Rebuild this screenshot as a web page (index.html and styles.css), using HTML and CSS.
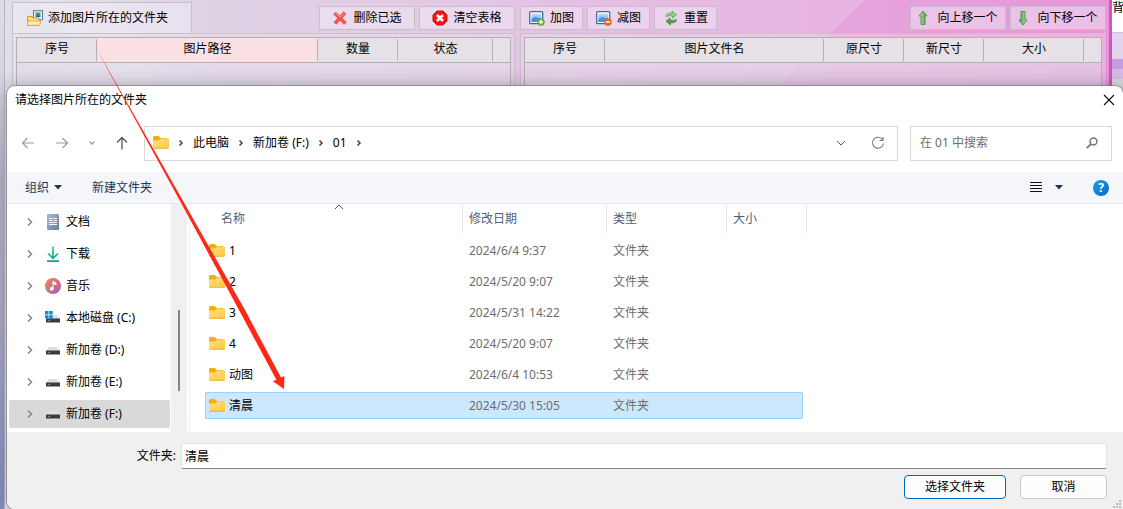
FILE: index.html
```
<!DOCTYPE html>
<html lang="zh-CN">
<head>
<meta charset="utf-8">
<title>请选择图片所在的文件夹</title>
<link rel="stylesheet" href="styles.css">
</head>
<body>
<svg class="defs" aria-hidden="true">
  <defs>
    <linearGradient id="g-folder" x1="0" y1="0" x2="1" y2="1"><stop offset="0" stop-color="#ffe08a"/><stop offset="1" stop-color="#ffc83a"/></linearGradient>
    <linearGradient id="g-doc" x1="0" y1="0" x2="1" y2="1"><stop offset="0" stop-color="#a3bdd6"/><stop offset="1" stop-color="#617f9f"/></linearGradient>
    <linearGradient id="g-music" x1="0" y1="0" x2="1" y2="1"><stop offset="0" stop-color="#f08a4b"/><stop offset="1" stop-color="#a859b8"/></linearGradient>
    <linearGradient id="g-down" x1="0" y1="0" x2="0" y2="1"><stop offset="0" stop-color="#36c98b"/><stop offset="1" stop-color="#149f95"/></linearGradient>
    <linearGradient id="g-green" x1="0" y1="0" x2="1" y2="0"><stop offset="0" stop-color="#b5e6a5"/><stop offset="1" stop-color="#3f9f45"/></linearGradient>
    <linearGradient id="g-sky" x1="0" y1="0" x2="0" y2="1"><stop offset="0" stop-color="#b8e2fa"/><stop offset="1" stop-color="#5a9fdc"/></linearGradient>
    <linearGradient id="g-arrow" gradientUnits="userSpaceOnUse" x1="92" y1="40" x2="108" y2="68"><stop offset="0" stop-color="#ff2718" stop-opacity=".1"/><stop offset="1" stop-color="#ff2718"/></linearGradient>
    <symbol id="folder" viewBox="0 0 16 14"><path d="M0 11V1.500Q0 0 1.500 0H5.500L8 2H14V5H0Z" fill="#f2ae13"/><path d="M0 4.500H6L8 2.500H15Q16 2.500 16 3.500V11.500Q16 12.500 15 12.500H1Q0 12.500 0 11.500Z" fill="url(#g-folder)"/><path d="M.5 12.300H15.500" stroke="#e5a820" stroke-width=".8"/></symbol>
    <symbol id="chev" viewBox="0 0 8 10"><path d="M2 1.500L5.500 5 2 8.500" fill="none" stroke="currentColor" stroke-width="1.500"/></symbol>
    <symbol id="chev-s" viewBox="0 0 8 10"><path d="M2.500 2.500L5 5 2.500 7.500" fill="none" stroke="currentColor" stroke-width="1.500"/></symbol>
    <symbol id="caret" viewBox="0 0 8 5"><path d="M0 0H8L4 4.500Z" fill="currentColor"/></symbol>
    <symbol id="drive" viewBox="0 0 16 16"><path d="M4 5H12L15 9H1Z" fill="#dcdfe3"/><rect x="1" y="8.500" width="14" height="4" rx=".5" fill="#3c3c3c"/><circle cx="4" cy="10.500" r=".8" fill="#52e06c"/></symbol>
    <symbol id="photo" viewBox="0 0 16 16"><rect x=".7" y="1.700" width="13" height="12" rx="1" fill="#fff" stroke="#3a67b0" stroke-width="1.300"/><rect x="2.500" y="3.500" width="9.500" height="8.500" fill="url(#g-sky)"/><path d="M2.500 9L6 7 12 9V12H2.500Z" fill="#4d8ed0"/></symbol>
    <symbol id="uparrow" viewBox="0 0 10 16"><path d="M5 1L9 6H7V14.500H3V6H1Z" fill="url(#g-green)" stroke="#3a8c3d" stroke-width=".8"/></symbol>
  </defs>
</svg>

<div class="desktop">
  <main class="app">
    <section class="pane pane-left">
      <div class="bar">
        <button class="tab"><svg width="16" height="16" viewBox="0 0 16 16"><rect x="6.500" y=".7" width="9" height="9" fill="#e8f1fb" stroke="#547aa8"/><rect x="8.500" y="2.500" width="5" height="4.500" fill="#51a351"/><path d="M9 7L11 4 13.500 7Z" fill="#2c5bb5"/><path d="M.5 6.500H5L6 8H12V15.300H.5Z" fill="#ffdf84" stroke="#d99c2b"/><path d="M1 11H14L12.500 15.300H.5Z" fill="#fff0ae" stroke="#dfa434" stroke-width=".8"/></svg>添加图片所在的文件夹</button>
        <div class="group">
          <button class="tool wide"><svg width="16" height="16" viewBox="0 0 16 16"><path d="M2.500 3L13.500 13.500M13 2.500L3 13.500" stroke="#f4544e" stroke-width="3.800"/><path d="M3.500 3L8 7 12.500 3" fill="none" stroke="#ff9088" stroke-width="1"/></svg>删除已选</button>
          <button class="tool wide"><svg width="16" height="16" viewBox="0 0 16 16"><path d="M5 1H11L15 5V11L11 15H5L1 11V5Z" fill="#f41414" stroke="#c91010"/><path d="M5 5L11 11M11 5L5 11" stroke="#fff" stroke-width="2.600"/></svg>清空表格</button>
        </div>
      </div>
      <div class="frame"><div class="sheet">
        <table class="grid">
          <colgroup><col class="c80"><col><col class="c80"><col class="c95"><col class="c17"></colgroup>
          <thead><tr><th>序号</th><th class="hot">图片路径</th><th>数量</th><th>状态</th><th></th></tr></thead>
        </table>
      </div></div>
    </section>
    <section class="pane pane-right">
      <div class="bar">
        <div class="group">
          <button class="tool"><svg width="16" height="16" viewBox="0 0 16 16"><use href="#photo"/><circle cx="12" cy="12" r="3.700" fill="#62a72f"/><path d="M12 9.800V14.200M9.800 12H14.200" stroke="#fff" stroke-width="1.400"/></svg>加图</button>
          <button class="tool"><svg width="16" height="16" viewBox="0 0 16 16"><use href="#photo"/><circle cx="12" cy="12" r="3.700" fill="#e4611a"/><path d="M9.800 12H14.200" stroke="#fff" stroke-width="1.500"/></svg>减图</button>
          <button class="tool"><svg width="16" height="16" viewBox="0 0 16 16"><path d="M3 6.500Q3.500 2.500 9 3.300V1L13.500 4.800 9.500 8V6Q6 5 3 6.500Z" fill="#8bd285" stroke="#4a9f4a" stroke-width=".7"/><path d="M13.500 9.500Q13 13.500 7.500 12.700V15L3 11.200 7 8V10Q10.500 11 13.500 9.500Z" fill="#4aa548" stroke="#368538" stroke-width=".7"/></svg>重置</button>
        </div>
        <div class="group">
          <button class="tool wide move"><svg width="10" height="16"><use href="#uparrow"/></svg>向上移一个</button>
          <button class="tool wide move"><svg class="flip" width="10" height="16"><use href="#uparrow"/></svg>向下移一个</button>
        </div>
      </div>
      <div class="frame"><div class="sheet">
        <table class="grid">
          <colgroup><col class="c80"><col><col class="c80"><col class="c80"><col class="c100"><col class="c17"></colgroup>
          <thead><tr><th>序号</th><th>图片文件名</th><th>原尺寸</th><th>新尺寸</th><th>大小</th><th></th></tr></thead>
        </table>
      </div></div>
    </section>
  </main>
  <aside class="neighbor"><span class="n-text">背景</span><span class="n-pale"></span><span class="n-violet"></span><span class="n-lilac"></span><span class="n-row"></span></aside>

  <section class="dialog" role="dialog" aria-labelledby="dlg-title">
    <header class="titlebar">
      <h1 id="dlg-title">请选择图片所在的文件夹</h1>
      <button class="plain" aria-label="关闭"><svg width="12" height="12" viewBox="0 0 12 12"><path d="M1 1L11 11M11 1L1 11" stroke="#111" stroke-width="1.100"/></svg></button>
    </header>
    <div class="nav">
      <div class="history">
        <button class="plain n18 dim" aria-label="后退"><svg width="14" height="14" viewBox="0 0 14 14"><path d="M13 7H1.500M6.500 2L1.500 7 6.500 12" fill="none" stroke="currentColor" stroke-width="1.200"/></svg></button>
        <button class="plain n18 dim" aria-label="前进"><svg width="14" height="14" viewBox="0 0 14 14"><path d="M1 7H12.500M7.500 2L12.500 7 7.500 12" fill="none" stroke="currentColor" stroke-width="1.200"/></svg></button>
        <button class="plain n10 dim" aria-label="最近位置"><svg width="8" height="6" viewBox="0 0 8 6"><path d="M1.500 1.500L4 4 6.500 1.500" fill="none" stroke="currentColor" stroke-width="1.300"/></svg></button>
        <button class="plain n18 mid" aria-label="向上"><svg width="14" height="14" viewBox="0 0 14 14"><path d="M7 13.500V1.500M2 6.500L7 1.500 12 6.500" fill="none" stroke="currentColor" stroke-width="1.300"/></svg></button>
      </div>
      <div class="address">
        <svg width="16" height="14"><use href="#folder"/></svg>
        <svg class="sep" width="8" height="10"><use href="#chev-s"/></svg>
        <button class="plain">此电脑</button>
        <svg class="sep" width="8" height="10"><use href="#chev-s"/></svg>
        <button class="plain">新加卷 (F:)</button>
        <svg class="sep" width="8" height="10"><use href="#chev-s"/></svg>
        <button class="plain">01</button>
        <svg class="sep" width="8" height="10"><use href="#chev-s"/></svg>
        <span class="fill"></span>
        <button class="plain n10 mid" aria-label="展开"><svg width="10" height="6" viewBox="0 0 10 6"><path d="M1 1L5 5 9 1" fill="none" stroke="currentColor"/></svg></button>
        <button class="plain refresh" aria-label="刷新"><svg width="14" height="14" viewBox="0 0 14 14"><path d="M11.800 4A5.500 5.500 0 1 0 12.500 7.500M12 1V4.500H8.500" fill="none" stroke="currentColor" stroke-width="1.100"/></svg></button>
      </div>
      <div class="search">
        <input type="search" aria-label="搜索" placeholder="在 01 中搜索">
        <svg width="12" height="12" viewBox="0 0 12 12"><circle cx="7.500" cy="4.500" r="3.400" fill="none" stroke="#777" stroke-width="1.500"/><path d="M5 7L.8 11.200" stroke="#777" stroke-width="1.800"/></svg>
      </div>
    </div>
    <div class="commands">
      <button class="plain cmd">组织<svg width="8" height="5"><use href="#caret"/></svg></button>
      <button class="plain cmd">新建文件夹</button>
      <span class="fill"></span>
      <button class="plain cmd views" aria-label="视图"><svg width="12" height="11" viewBox="0 0 12 11"><path d="M0 .5H12M0 3.500H12M0 6.500H12M0 9.500H12" stroke="#111"/></svg><svg width="8" height="5"><use href="#caret"/></svg></button>
      <button class="plain help" aria-label="帮助">?</button>
    </div>
    <div class="body">
      <ul class="tree">
        <li><svg class="exp" width="8" height="10"><use href="#chev"/></svg><svg width="16" height="16" viewBox="0 0 16 16"><rect x="2" width="12" height="16" rx="1" fill="url(#g-doc)"/><path d="M4 4.500H7.500M4 6.500H7.500M8.500 4.500H12M8.500 6.500H12M4 8.500H12M4 10.500H12" stroke="#fff" stroke-width="1"/></svg>文档</li>
        <li><svg class="exp" width="8" height="10"><use href="#chev"/></svg><svg width="16" height="16" viewBox="0 0 16 16"><path d="M8 .5V12M3 7.500L8 12.300 13 7.500M2 15.200H14" fill="none" stroke="url(#g-down)" stroke-width="1.700"/></svg>下载</li>
        <li><svg class="exp" width="8" height="10"><use href="#chev"/></svg><svg width="16" height="16" viewBox="0 0 16 16"><circle cx="8" cy="8" r="8" fill="url(#g-music)"/><circle cx="6.700" cy="10.800" r="1.900" fill="#fff"/><path d="M8 10.800V3.500L11 5V6.700L8 5.500" fill="#fff" stroke="#fff" stroke-width="1"/></svg>音乐</li>
        <li><svg class="exp" width="8" height="10"><use href="#chev"/></svg><svg width="16" height="16" viewBox="0 0 16 16"><use href="#drive" width="16" height="16"/><path d="M0 1H3.500V4.500H0ZM4.200 1H7.700V4.500H4.200ZM0 5.200H3.500V8.500H0ZM4.200 5.200H7.700V8.500H4.200Z" fill="#1488d8"/></svg>本地磁盘 (C:)</li>
        <li><svg class="exp" width="8" height="10"><use href="#chev"/></svg><svg width="16" height="16"><use href="#drive"/></svg>新加卷 (D:)</li>
        <li><svg class="exp" width="8" height="10"><use href="#chev"/></svg><svg width="16" height="16"><use href="#drive"/></svg>新加卷 (E:)</li>
        <li class="on"><svg class="exp" width="8" height="10"><use href="#chev"/></svg><svg width="16" height="16"><use href="#drive"/></svg>新加卷 (F:)</li>
      </ul>
      <div class="gutter"><span class="thumb"></span></div>
      <div class="files">
        <table class="list">
          <colgroup><col class="f-name"><col class="f-date"><col class="f-type"><col class="f-size"><col class="f-tail"></colgroup>
          <thead><tr><th class="first">名称<svg class="sort" width="10" height="6" viewBox="0 0 10 6"><path d="M1 5L5 1 9 5" fill="none" stroke="#555"/></svg></th><th>修改日期</th><th>类型</th><th colspan="2">大小</th></tr></thead>
          <tbody>
            <tr><td><span class="file"><svg width="16" height="14"><use href="#folder"/></svg>1</span></td><td>2024/6/4 9:37</td><td>文件夹</td><td></td></tr>
            <tr><td><span class="file"><svg width="16" height="14"><use href="#folder"/></svg>2</span></td><td>2024/5/20 9:07</td><td>文件夹</td><td></td></tr>
            <tr><td><span class="file"><svg width="16" height="14"><use href="#folder"/></svg>3</span></td><td>2024/5/31 14:22</td><td>文件夹</td><td></td></tr>
            <tr><td><span class="file"><svg width="16" height="14"><use href="#folder"/></svg>4</span></td><td>2024/5/20 9:07</td><td>文件夹</td><td></td></tr>
            <tr><td><span class="file"><svg width="16" height="14"><use href="#folder"/></svg>动图</span></td><td>2024/6/4 10:53</td><td>文件夹</td><td></td></tr>
            <tr class="on"><td><span class="file"><svg width="16" height="14"><use href="#folder"/></svg>清晨</span></td><td>2024/5/30 15:05</td><td>文件夹</td><td></td></tr>
          </tbody>
        </table>
      </div>
    </div>
    <footer class="foot">
      <div class="field"><label for="folder-name">文件夹:</label><input id="folder-name" type="text" value="清晨"></div>
      <div class="actions"><button class="btn primary">选择文件夹</button><button class="btn cancel">取消</button></div>
      <svg class="grip" width="9" height="9" viewBox="0 0 9 9"><path d="M6 0H8V2H6ZM3 3H5V5H3ZM6 3H8V5H6ZM0 6H2V8H0ZM3 6H5V8H3ZM6 6H8V8H6Z" fill="#bcbcbc"/></svg>
    </footer>
  </section>

  <svg class="pointer" width="300" height="400" aria-hidden="true"><path d="M92 41L182.500 200 245 310 281 377.500 284.500 376 284 389 272.500 381 276.500 380 239 310 179.500 200Z" fill="url(#g-arrow)"/></svg>
</div>
</body>
</html>
```
FILE: styles.css
```
* { box-sizing: border-box; }
body {
  margin: 0;
  font: 12px/16px "Noto Sans", "Noto Sans CJK SC", sans-serif;
  color: #000;
}
button, input { font: inherit; color: inherit; }
button { display: inline-flex; align-items: center; justify-content: center; }
svg { flex: none; display: block; }
.defs { position: absolute; width: 0; height: 0; }
.fill { flex: 1; }

.desktop {
  position: relative;
  display: flex;
  min-height: 100vh;
  overflow: hidden;
  background: linear-gradient(180deg, #dcdbe6 0, #d4d3e0 18%, #b5b5ca 35%, #a9aac8 65%, #8190c2 100%);
}

/* main program window */
.app {
  flex: 1;
  display: flex;
  gap: 5px;
  min-width: 0;
  margin-left: 4px;
  padding: 2px 3px 0 7px;
  border-left: 1px solid #b9b7c4;
  border-right: 3px solid #d850c4;
  background:
    linear-gradient(135deg, transparent 0 72%, rgba(225, 130, 210, .3) 72%),
    linear-gradient(45deg, transparent 0 10%, rgba(255, 255, 255, .2) 10%, transparent 20%),
    linear-gradient(90deg, #e0dfe9 0, #dfd2e5 20%, #e2c9e4 40%, #e6bde4 55%, #e8b4e2 75%, #e79fdc 100%);
  background-size: 100% 90px, 100% 90px, 100% 100%;
  background-repeat: no-repeat;
}
.pane { display: flex; flex-direction: column; min-width: 0; }
.pane-left { flex: 503 1 0; }
.pane-right { flex: 586 1 0; }
.bar { display: flex; align-items: center; justify-content: space-between; height: 31px; }
.group { display: flex; gap: 4px; }
.tab, .tool { border: 1px solid #c6bfc9; background: rgba(245, 240, 248, .45); gap: 5px; white-space: nowrap; }
.tab { justify-content: flex-start; height: 31px; width: 180px; padding: 0 0 0 14px; border-bottom: 0; }
.tool { height: 24px; width: 63px; padding: 0; }
.tool.wide { width: 96px; }
.tool.move { gap: 9px; }
.flip { transform: rotate(180deg); }
.frame { flex: 1; padding: 3px 3px 0; border: 1px solid #c9c0cc; background: rgba(240, 230, 242, .35); }
.sheet { height: 100%; border: 1px solid #b3afb5; background: rgba(225, 220, 235, .4); }
.grid { width: 100%; table-layout: fixed; border-spacing: 0; }
.grid th {
  height: 25px;
  padding: 0 0 2px;
  font-weight: 400;
  vertical-align: middle;
  background: linear-gradient(#b3afb5, #b3afb5) right 1px / 1px 22px no-repeat, #e6e1e6;
  border-bottom: 1px solid #b3afb5;
}
.grid th.hot { background-color: #fbe1e4; }
.grid th:last-child { background-image: none; }
.c80 { width: 80px; }
.c95 { width: 95px; }
.c100 { width: 100px; }
.c17 { width: 17px; }

/* strip of the next window */
.neighbor { width: 11px; overflow: hidden; display: flex; flex-direction: column; background: #fff; white-space: nowrap; }
.neighbor span { flex: none; }
.n-text { height: 32px; }
.n-pale { height: 27px; background: #e2d3ee; border-top: 1px solid #cfc4da; }
.n-violet { height: 10px; background: #c59be2; }
.n-lilac { height: 10px; background: #d5bce6; }
.n-row { height: 20px; background: #d9d6dc; }

/* folder dialog, stacked over the program */
.dialog {
  position: absolute;
  top: 86px;
  right: 0;
  bottom: 0;
  left: 7px;
  display: flex;
  flex-direction: column;
  background: #fff;
  border-radius: 8px 8px 0 8px;
  box-shadow: 0 0 0 1px rgba(110, 105, 125, .55), 0 0 18px rgba(0, 0, 0, .3);
  overflow: hidden;
}
.plain { padding: 0; border: 0; background: none; }
.titlebar { display: flex; align-items: center; justify-content: space-between; height: 28px; padding: 0 8px; }
.titlebar h1 { margin: 0; font-size: 12px; font-weight: 400; }

.nav { display: flex; align-items: center; height: 58px; padding: 0 11px 0 12px; }
.history { display: flex; align-items: center; gap: 16px; margin-right: 13px; }
.n18 { width: 18px; }
.n10 { width: 10px; }
.dim { color: #999; }
.mid { color: #555; }
.address {
  flex: 1;
  display: flex;
  align-items: center;
  gap: 8px;
  height: 35px;
  padding: 0 12px 0 8px;
  border: 1px solid #d9d9d9;
}
.address .sep { color: #444; }
.refresh { margin-left: 17px; color: #777; }
.search { display: flex; align-items: center; width: 202px; height: 35px; margin-left: 12px; padding: 0 13px 0 9px; border: 1px solid #d9d9d9; }
.search input { flex: 1; min-width: 0; padding: 0; border: 0; outline: 0; background: none; }
.search input::placeholder { color: #6d6d6d; opacity: 1; }

.commands { display: flex; align-items: center; height: 32px; padding: 0 14px 0 18px; background: #f4f6f9; border-bottom: 1px solid #e5e7ea; color: #1c3659; }
.cmd { gap: 5px; margin-right: 30px; }
.views { gap: 13px; }
.help { width: 16px; height: 16px; border-radius: 50%; background: linear-gradient(135deg, #1ba1f2, #0067c0); color: #fff; font-weight: 700; }

.body { flex: 1; display: flex; min-height: 0; }
.tree { width: 164px; margin: 0; padding: 2px 1px 0 2px; list-style: none; }
.tree li { display: flex; align-items: center; gap: 5px; height: 28px; margin: 2px 0 4px; padding-left: 17px; border-radius: 2px; }
.tree li + li { margin-top: 0; }
.tree .exp { margin-right: 6px; color: #858585; }
.tree .on { background: #d9d9d9; }
.gutter { width: 16px; padding-top: 106px; background: #f0f0f0; }
.thumb { display: block; width: 2px; height: 81px; margin: 0 auto; background: #858585; }
.files { flex: 1; min-width: 0; margin-left: 2px; padding-left: 15px; border-left: 1px solid #f2f2f2; }
.list { margin-top: -4px; table-layout: fixed; width: 602px; border-collapse: separate; border-spacing: 0 4px; }
.f-name { width: 258px; }
.f-date { width: 144px; }
.f-type { width: 120px; }
.f-size { width: 76px; }
.f-tail { width: 4px; }
.list th { position: relative; height: 29px; padding: 0 0 0 6px; text-align: left; font-weight: 400; color: #4c607a; border-right: 1px solid #e5e5e5; }
.list th.first { padding-left: 16px; }
.sort { position: absolute; top: 0; left: 50%; }
.list td { height: 27px; padding: 0 0 0 6px; color: #6d6d6d; border: 1px solid transparent; border-width: 1px 0; }
.list td:first-child { padding-left: 3px; border-left-width: 1px; color: #000; }
.list .on td { background: #cce8ff; border-color: #99d1ff; }
.list .on td:first-child { border-radius: 2px 0 0 2px; }
.list .on td:last-child { border-right-width: 1px; border-radius: 0 2px 2px 0; }
.file { display: flex; align-items: center; gap: 4px; }

.foot { position: relative; height: 77px; padding: 11px 16px 0 0; background: #f0f0f0; }
.field { display: flex; align-items: center; gap: 5px; }
.field label { width: 169px; text-align: right; }
.field input { flex: 1; min-width: 0; height: 26px; padding: 0 3px; border: 1px solid #e0e0e0; border-bottom-color: #858585; border-radius: 2px; background: #fff; outline: 0; }
.actions { display: flex; justify-content: flex-end; gap: 14px; margin-top: 6px; }
.btn { height: 24px; border: 1px solid #c8c8c8; border-radius: 4px; background: #fdfdfd; padding: 0; }
.primary { width: 102px; border-color: #0067c0; }
.cancel { width: 87px; }
.grip { position: absolute; right: 1px; bottom: 0; }

/* red pointer drawn across both windows */
.pointer { position: absolute; top: 0; left: 0; pointer-events: none; }
```
